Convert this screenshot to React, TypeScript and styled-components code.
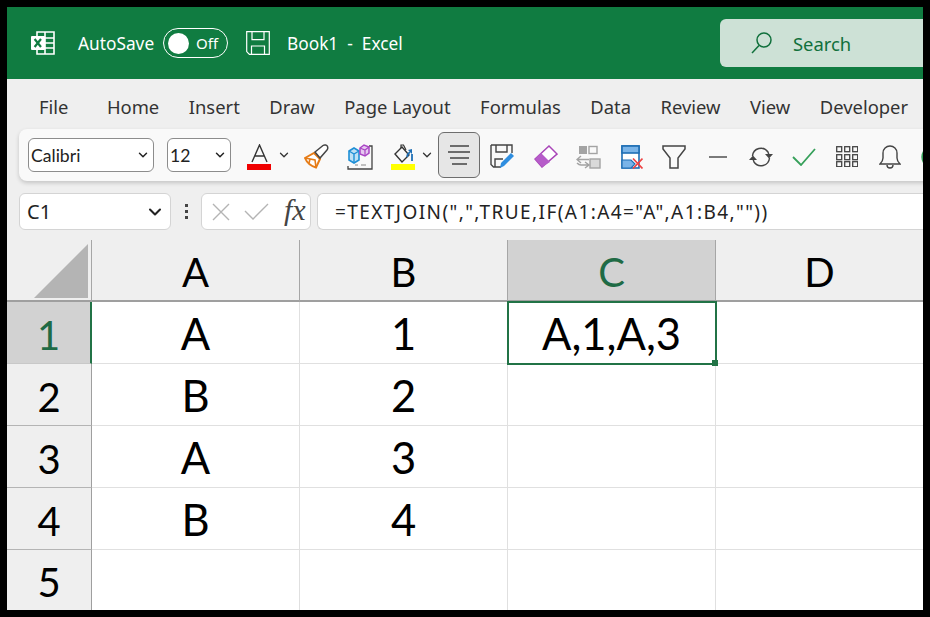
import React from "react";
import styled, { createGlobalStyle } from "styled-components";
import { ChevronDown } from "lucide-react";

const GlobalStyle = createGlobalStyle`
  html, body {
    margin: 0;
    background: #000;
  }
  * {
    box-sizing: border-box;
  }
`;

const uiFont = `"Noto Sans", "Open Sans", sans-serif`;
const cellFont = `Lato, "Open Sans", sans-serif`;

const Frame = styled.div`
  width: 930px;
  height: 617px;
  padding: 7px;
  background: #000;
`;

const Window = styled.div`
  width: 916px;
  height: 603px;
  background: #efefef;
  overflow: hidden;
  display: flex;
  flex-direction: column;
`;

const TitleBar = styled.div`
  height: 72px;
  flex: none;
  background: #107c41;
  color: #fff;
  display: flex;
  align-items: center;
  padding-left: 24px;
  font-family: ${uiFont};
  font-size: 17.3px;
`;

const AutoSaveLabel = styled.span`
  margin-left: 23px;
  width: 85px;
`;

const Toggle = styled.div`
  width: 65px;
  height: 30px;
  border: 1px solid #fff;
  border-radius: 15px;
  display: flex;
  align-items: center;
  padding-left: 4px;
  font-size: 15px;
  gap: 7px;
`;

const Knob = styled.span`
  width: 21px;
  height: 21px;
  border-radius: 50%;
  background: #fff;
`;

const SaveSlot = styled.div`
  margin-left: 18px;
  display: flex;
`;

const BookName = styled.span`
  margin-left: 17px;
  white-space: pre;
`;

const SearchBox = styled.div`
  margin-left: auto;
  width: 203px;
  height: 48px;
  border-radius: 6px 0 0 6px;
  background: #cde1d6;
  color: #10703c;
  display: flex;
  align-items: center;
  padding-left: 31px;
  gap: 21px;
  font-size: 18.4px;
`;

const Tabs = styled.nav`
  height: 50px;
  flex: none;
  display: flex;
  align-items: center;
  gap: 29.5px;
  padding: 4px 0 0 32px;
  font-family: ${uiFont};
  font-size: 18.4px;
  color: #333;
  white-space: nowrap;
`;

const Tab = styled.span`
  &:first-child {
    margin-right: 9px;
  }
`;

const Toolbar = styled.div`
  height: 52px;
  flex: none;
  margin-left: 12px;
  width: 920px;
  background: #f9f9f9;
  border-radius: 8px 0 0 8px;
  box-shadow: 0 2px 4px rgba(0, 0, 0, 0.18);
  display: flex;
  align-items: center;
  padding-left: 9px;
`;

const FakeSelect = styled.div<{ $width: number; $gap: number }>`
  width: ${(p) => p.$width}px;
  height: 34px;
  margin-right: ${(p) => p.$gap}px;
  flex: none;
  background: #fff;
  border: 1px solid #8c8c8c;
  border-radius: 6px;
  display: flex;
  align-items: center;
  justify-content: space-between;
  padding: 0 3px 0 2px;
  font-family: ${cellFont};
  font-size: 17.6px;
  color: #222;
`;

const Tool = styled.div<{ $width?: number }>`
  width: ${(p) => p.$width ?? 43}px;
  height: 46px;
  flex: none;
  display: flex;
  align-items: center;
  justify-content: center;
  padding-top: 3px;
  svg {
    flex: none;
  }
`;

const ChevronSlot = styled(Tool)`
  padding-top: 0;
`;

const ActiveTool = styled(Tool)`
  width: 42px;
  margin: 0 1px 0 9px;
  padding-top: 0;
  background: #e6e6e6;
  border: 1px solid #6e6e6e;
  border-radius: 6px;
`;

const FormulaRow = styled.div`
  height: 37px;
  flex: none;
  margin: 12px 0 0 12px;
  display: flex;
  align-items: stretch;
`;

const NameBox = styled.div`
  width: 152px;
  flex: none;
  background: #fff;
  border: 1px solid #d4d4d4;
  border-radius: 6px;
  display: flex;
  align-items: center;
  justify-content: space-between;
  padding: 0 5px 0 7px;
  font-family: ${uiFont};
  font-size: 20px;
  color: #222;
`;

const Dots = styled.div`
  width: 30px;
  flex: none;
  display: flex;
  flex-direction: column;
  align-items: center;
  justify-content: center;
  gap: 3px;
  span {
    width: 3px;
    height: 3px;
    background: #444;
  }
`;

const FormulaButtons = styled.div`
  width: 110px;
  flex: none;
  background: #fff;
  border: 1px solid #d4d4d4;
  border-radius: 6px;
  display: flex;
  align-items: center;
  padding-left: 9px;
  gap: 13px;
`;

const FxLabel = styled.span`
  font-family: "Liberation Serif", serif;
  font-style: italic;
  font-size: 30px;
  line-height: 1;
  color: #444;
  margin: -4px 0 0 2px;
`;

const FormulaInput = styled.div`
  width: 620px;
  flex: none;
  margin-left: 6px;
  background: #fff;
  border: 1px solid #d4d4d4;
  border-radius: 6px 0 0 6px;
  border-right: 0;
  display: flex;
  align-items: center;
  padding-left: 17px;
  font-family: ${uiFont};
  font-size: 19px;
  letter-spacing: 1.42px;
  color: #222;
  white-space: nowrap;
`;

const Sheet = styled.div`
  margin-top: 10px;
  flex: none;
  display: grid;
  grid-template-columns: 85px repeat(4, 208px);
  grid-template-rows: 62px repeat(4, 62px) 61px;
  font-family: ${cellFont};
`;

const Corner = styled.div`
  border-right: 1px solid #a6a6a6;
  border-bottom: 2px solid #9f9f9f;
  display: flex;
  align-items: flex-end;
  justify-content: flex-end;
  padding: 0 3px 2px 0;
`;

const ColumnHeader = styled.div<{ $active?: boolean }>`
  background: ${(p) => (p.$active ? "#d2d2d2" : "#efefef")};
  color: ${(p) => (p.$active ? "#1f6b45" : "#000")};
  border-right: 1px solid #a6a6a6;
  border-bottom: 2px solid #9f9f9f;
  display: flex;
  align-items: center;
  justify-content: center;
  font-size: 40px;
  padding-top: 4px;
`;

const RowHeader = styled.div<{ $active?: boolean }>`
  background: ${(p) => (p.$active ? "#d2d2d2" : "#efefef")};
  color: ${(p) => (p.$active ? "#1f6b45" : "#000")};
  border-right: ${(p) => (p.$active ? "2px solid #217346" : "1px solid #9f9f9f")};
  border-bottom: 1px solid ${(p) => (p.$active ? "#c8c8c8" : "#b4b4b4")};
  display: flex;
  align-items: center;
  justify-content: center;
  font-size: 40px;
  padding-top: 4px;
`;

const Cell = styled.div`
  position: relative;
  background: #fff;
  border-right: 1px solid #e0e0e0;
  border-bottom: 1px solid #e0e0e0;
  display: flex;
  align-items: center;
  justify-content: center;
  font-size: 43.5px;
  color: #000;
`;

const SelectedCell = styled(Cell)`
  outline: 2px solid #217346;
  outline-offset: -1px;
  z-index: 1;
`;

const FillHandle = styled.span`
  position: absolute;
  right: -3px;
  bottom: -3px;
  width: 6px;
  height: 6px;
  background: #217346;
`;

const ExcelLogo = () => (
  <svg width="24" height="24" viewBox="0 0 24 24">
    <path d="M6 1h17v22H6z" fill="none" stroke="#fff" strokeWidth="1.6" />
    <path d="M14 1v22M6 7h17M6 12h17M6 17h17" stroke="#fff" strokeWidth="1.6" />
    <rect x="0" y="5" width="14" height="14" rx="1" fill="#fff" />
    <path d="M3.6 8l6.4 8M10 8l-6.4 8" stroke="#107c41" strokeWidth="2.2" />
  </svg>
);

const SaveIcon = () => (
  <svg width="24" height="24" viewBox="0 0 24 24" fill="none" stroke="#fff" strokeWidth="1.2">
    <path d="M.7.7h22.6v22.6H3.4L.7 20.6z" />
    <path d="M6 .7v8h12v-8M5.500 23.300v-8.300h13v8.300" />
  </svg>
);

const SearchIcon = () => (
  <svg width="21" height="22" viewBox="0 0 21 22" fill="none" stroke="#10703c" strokeWidth="1.5">
    <circle cx="13" cy="8" r="7" />
    <path d="M8 13.5L1 21" />
  </svg>
);

const FontColorIcon = () => (
  <svg width="25" height="26" viewBox="0 0 25 26">
    <path d="M5 18L12.5 1 20 18M8 12h9" fill="none" stroke="#333" strokeWidth="1.4" />
    <rect y="20" width="24" height="6" fill="#f00000" />
  </svg>
);

const BrushIcon = () => (
  <svg width="25" height="25" viewBox="0 0 25 25" fill="none">
    <path d="M1 14l9-5 6 6-4 8.500C7 22 3 19 1 14z" fill="#fff" stroke="#e67c17" strokeWidth="2" />
    <path d="M1 14l10 2 1 7.500M6 15l-1 4" stroke="#e67c17" strokeWidth="1.6" />
    <path d="M11 8l8-6.500c1.500-1 4-.5 4.500 1s.5 2.500-.5 3.500l-7 8z" fill="#fff" stroke="#444" strokeWidth="1.5" />
  </svg>
);

const ObjectsIcon = () => (
  <svg width="26" height="26" viewBox="0 0 26 26" fill="none">
    <path d="M1 22v3h24V2h-3" stroke="#444" strokeWidth="1.3" />
    <path d="M14 21h5M8 21h3" stroke="#888" strokeWidth="1" />
    <path d="M2 7l5-3 5 3v9l-5 3-5-3z" fill="#bfe0f5" stroke="#1f8fd6" strokeWidth="1.6" />
    <path d="M2 7l5 3 5-3M7 10v9" stroke="#1f8fd6" strokeWidth="1.4" />
    <path d="M13 4l4-3 5 2v6l-4 3-5-2z" fill="#e6c8f0" stroke="#a945c4" strokeWidth="1.5" />
    <path d="M13 4l5 2 4-3M18 6v6" stroke="#a945c4" strokeWidth="1.2" />
  </svg>
);

const FillColorIcon = () => (
  <svg width="24" height="26" viewBox="0 0 24 26" fill="none">
    <path d="M4 10l7-7 7 8-7 7z" stroke="#333" strokeWidth="1.4" />
    <path d="M10 4V1h2.500l2.500 5" stroke="#333" strokeWidth="1.2" />
    <path d="M16 13c.5-3 1.500-4 3-5" stroke="#1f6fb5" strokeWidth="1.800" />
    <path d="M17 6l4-1v5z" fill="#1f6fb5" />
    <path d="M21 10v7" stroke="#1f6fb5" strokeWidth="1.800" />
    <rect y="20" width="24" height="6" fill="#ffff00" />
  </svg>
);

const AlignIcon = () => (
  <svg width="22" height="20" viewBox="0 0 22 20" stroke="#444" strokeWidth="1.5">
    <path d="M2 1h19M0 7h22M2 13h19M4 19h15" />
  </svg>
);

const SaveEditIcon = () => (
  <svg width="25" height="25" viewBox="0 0 25 25" fill="none">
    <path d="M1 1h21v8M11 23H3.500L1 20.500V1" stroke="#444" strokeWidth="1.4" />
    <path d="M6 1v7h11V1M5 23v-8h8" stroke="#444" strokeWidth="1.4" />
    <path d="M10 24l1-5L21 9l3 3-10 10z" fill="#2f8ee0" />
  </svg>
);

const EraserIcon = () => (
  <svg width="24" height="23" viewBox="0 0 24 23">
    <path d="M15 1l8 8-15 13-7-8z" fill="#fff" stroke="#a945b8" strokeWidth="1.5" />
    <path d="M1 14l6-6 9 9-8 5z" fill="#b65cc9" />
  </svg>
);

const CompareIcon = () => (
  <svg width="25" height="24" viewBox="0 0 25 24" fill="none">
    <rect x="3" y="1" width="8" height="8" fill="#a3a3a3" />
    <rect x="13" y="1.500" width="8" height="7" stroke="#a3a3a3" strokeWidth="1.4" />
    <rect x="14" y="14" width="10" height="9" fill="#d9d9d9" stroke="#a3a3a3" strokeWidth="1.4" />
    <path d="M5 11l-4 3.500 4 3.500M1 14.500h12M9 17l4 3-4 3M13 20H5c-2 0-3-1-4-2" stroke="#a3a3a3" strokeWidth="1.4" />
  </svg>
);

const RemoveIcon = () => (
  <svg width="22" height="24" viewBox="0 0 22 24" fill="none">
    <rect x="1" y="1" width="17" height="22" fill="#fff" stroke="#1f6fb5" strokeWidth="1.6" />
    <rect x="1" y="1" width="17" height="7" fill="#7ab4e8" stroke="#1f6fb5" strokeWidth="1.6" />
    <path d="M1 15h9l4 4-4 4H1z" fill="#7ab4e8" stroke="#1f6fb5" strokeWidth="1.2" />
    <path d="M12 13.500l9.500 10M21.500 13.500l-9.500 10" stroke="#ee4444" strokeWidth="1.7" />
  </svg>
);

const FilterIcon = () => (
  <svg width="26" height="24" viewBox="0 0 26 24" fill="none" stroke="#444" strokeWidth="1.5">
    <path d="M1 1h22v3l-7 9v10H8V13L1 4z" />
  </svg>
);

const DashIcon = () => (
  <svg width="18" height="4" viewBox="0 0 18 4" stroke="#444" strokeWidth="1.4">
    <path d="M0 2h18" />
  </svg>
);

const RefreshIcon = () => (
  <svg width="24" height="20" viewBox="0 0 24 20" fill="none" stroke="#444" strokeWidth="1.4">
    <path d="M3.500 9A8.500 8.500 0 0 1 19 5l1 3M20.500 11A8.500 8.500 0 0 1 5 15l-1-3" />
    <path d="M16 7h8l-4 4.500zM8 13H0l4-4.500z" fill="#444" stroke="none" />
  </svg>
);

const CheckIcon = () => (
  <svg width="24" height="18" viewBox="0 0 24 18" fill="none" stroke="#36a05a" strokeWidth="1.8">
    <path d="M1 9l8 8L23 1" />
  </svg>
);

const GridIcon = () => (
  <svg width="22" height="21" viewBox="0 0 22 21" fill="none" stroke="#444" strokeWidth="1.3">
    {[0, 8, 15].flatMap((y) =>
      [0, 8, 16].map((x) => <rect key={`${x}-${y}`} x={x + 0.7} y={y + 0.7} width="5" height="5" />)
    )}
  </svg>
);

const BellIcon = () => (
  <svg width="22" height="24" viewBox="0 0 22 24" fill="none" stroke="#444" strokeWidth="1.4">
    <path d="M1 19c2-2 3-3 3-6V8a7 7 0 0 1 14 0v5c0 3 1 4 3 6z" />
    <path d="M8 20c0 4 6 4 6 0" />
  </svg>
);

const GreenCircle = () => (
  <svg width="24" height="24" viewBox="0 0 24 24" fill="#fff" stroke="#36a05a" strokeWidth="2.400">
    <circle cx="12" cy="12" r="10.500" />
  </svg>
);

const CrossIcon = () => (
  <svg width="20" height="18" viewBox="0 0 20 18" stroke="#b4b4b4" strokeWidth="1.4">
    <path d="M2 1l16 16M18 1L2 17" />
  </svg>
);

const TickIcon = () => (
  <svg width="25" height="18" viewBox="0 0 25 18" fill="none" stroke="#b4b4b4" strokeWidth="1.4">
    <path d="M1 8l8 8L24 1" />
  </svg>
);

const tabs = ["File", "Home", "Insert", "Draw", "Page Layout", "Formulas", "Data", "Review", "View", "Developer"];
const rows = [
  ["A", "1"],
  ["B", "2"],
  ["A", "3"],
  ["B", "4"],
  ["", ""],
];

export default function App() {
  return (
    <Frame>
      <GlobalStyle />
      <Window>
        <TitleBar>
          <ExcelLogo />
          <AutoSaveLabel>AutoSave</AutoSaveLabel>
          <Toggle>
            <Knob />
            Off
          </Toggle>
          <SaveSlot>
            <SaveIcon />
          </SaveSlot>
          <BookName>Book1  -  Excel</BookName>
          <SearchBox>
            <SearchIcon />
            Search
          </SearchBox>
        </TitleBar>

        <Tabs>
          {tabs.map((t) => (
            <Tab key={t}>{t}</Tab>
          ))}
        </Tabs>

        <Toolbar>
          <FakeSelect $width={126} $gap={13}>
            Calibri
            <ChevronDown size={14} strokeWidth={2.5} />
          </FakeSelect>
          <FakeSelect $width={64} $gap={16}>
            12
            <ChevronDown size={14} strokeWidth={2.5} />
          </FakeSelect>
          <Tool $width={25}>
            <FontColorIcon />
          </Tool>
          <ChevronSlot $width={23}>
            <ChevronDown size={14} strokeWidth={2.2} color="#333" />
          </ChevronSlot>
          <Tool>
            <BrushIcon />
          </Tool>
          <Tool>
            <ObjectsIcon />
          </Tool>
          <Tool>
            <FillColorIcon />
          </Tool>
          <ChevronSlot $width={5}>
            <ChevronDown size={14} strokeWidth={2.2} color="#333" />
          </ChevronSlot>
          <ActiveTool>
            <AlignIcon />
          </ActiveTool>
          <Tool>
            <SaveEditIcon />
          </Tool>
          <Tool>
            <EraserIcon />
          </Tool>
          <Tool>
            <CompareIcon />
          </Tool>
          <Tool $width={44}>
            <RemoveIcon />
          </Tool>
          <Tool $width={42}>
            <FilterIcon />
          </Tool>
          <Tool>
            <DashIcon />
          </Tool>
          <Tool>
            <RefreshIcon />
          </Tool>
          <Tool>
            <CheckIcon />
          </Tool>
          <Tool>
            <GridIcon />
          </Tool>
          <Tool>
            <BellIcon />
          </Tool>
          <Tool>
            <GreenCircle />
          </Tool>
        </Toolbar>

        <FormulaRow>
          <NameBox>
            C1
            <ChevronDown size={20} strokeWidth={2.5} />
          </NameBox>
          <Dots>
            <span />
            <span />
            <span />
          </Dots>
          <FormulaButtons>
            <CrossIcon />
            <TickIcon />
            <FxLabel>fx</FxLabel>
          </FormulaButtons>
          <FormulaInput>=TEXTJOIN(",",TRUE,IF(A1:A4="A",A1:B4,""))</FormulaInput>
        </FormulaRow>

        <Sheet>
          <Corner>
            <svg width="54" height="54" viewBox="0 0 54 54">
              <path d="M54 0v54H0z" fill="#b4b4b4" />
            </svg>
          </Corner>
          <ColumnHeader>A</ColumnHeader>
          <ColumnHeader>B</ColumnHeader>
          <ColumnHeader $active>C</ColumnHeader>
          <ColumnHeader>D</ColumnHeader>
          {rows.map((row, i) => (
            <React.Fragment key={i}>
              <RowHeader $active={i === 0}>{i + 1}</RowHeader>
              <Cell>{row[0]}</Cell>
              <Cell>{row[1]}</Cell>
              {i === 0 ? (
                <SelectedCell>
                  A,1,A,3
                  <FillHandle />
                </SelectedCell>
              ) : (
                <Cell />
              )}
              <Cell />
            </React.Fragment>
          ))}
        </Sheet>
      </Window>
    </Frame>
  );
}
